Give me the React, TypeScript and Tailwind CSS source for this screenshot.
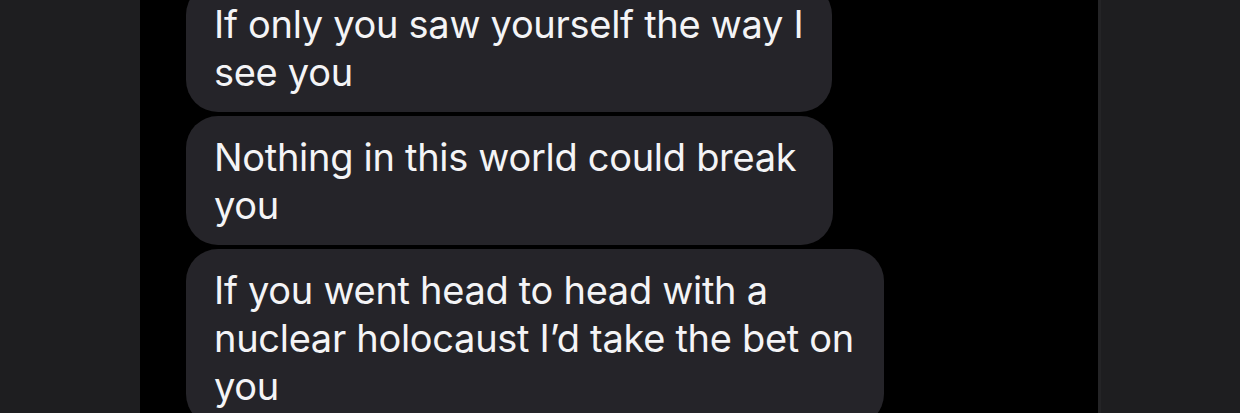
import React from "react";

const messages = [
  { lines: ["If only you saw yourself the way I", "see you"], width: "w-[646px]" },
  { lines: ["Nothing in this world could break", "you"], width: "w-[647px]" },
  {
    lines: ["If you went head to head with a", "nuclear holocaust I’d take the bet on", "you"],
    width: "w-[698px]",
  },
];

function Bubble({ lines, width }: { lines: string[]; width: string }) {
  return (
    <div
      className={`${width} rounded-[32px] bg-[#252429] pl-[28px] pr-[20px] pt-[17px] pb-[16px] text-[38px] leading-[48px] tracking-[-0.3px] text-[#f4f4f6]`}
    >
      {lines.map((line, i) => (
        <div key={i} className="whitespace-nowrap">
          {line}
        </div>
      ))}
    </div>
  );
}

export default function App() {
  return (
    <div
      className="flex h-[413px] w-[1240px] overflow-hidden bg-black"
      style={{ fontFamily: "Inter, 'Noto Sans', sans-serif" }}
    >
      {/* side panels of the split view */}
      <div className="w-[140px] shrink-0 bg-[#1e1e20]" />

      <div className="flex-1 bg-black pl-[46px]">
        <div className="-mt-[17px] flex flex-col gap-[4px]">
          {messages.map((m, i) => (
            <Bubble key={i} lines={m.lines} width={m.width} />
          ))}
        </div>
      </div>

      <div className="w-[142px] shrink-0 border-l-[3px] border-[#242426] bg-[#1e1e20]" />
    </div>
  );
}
